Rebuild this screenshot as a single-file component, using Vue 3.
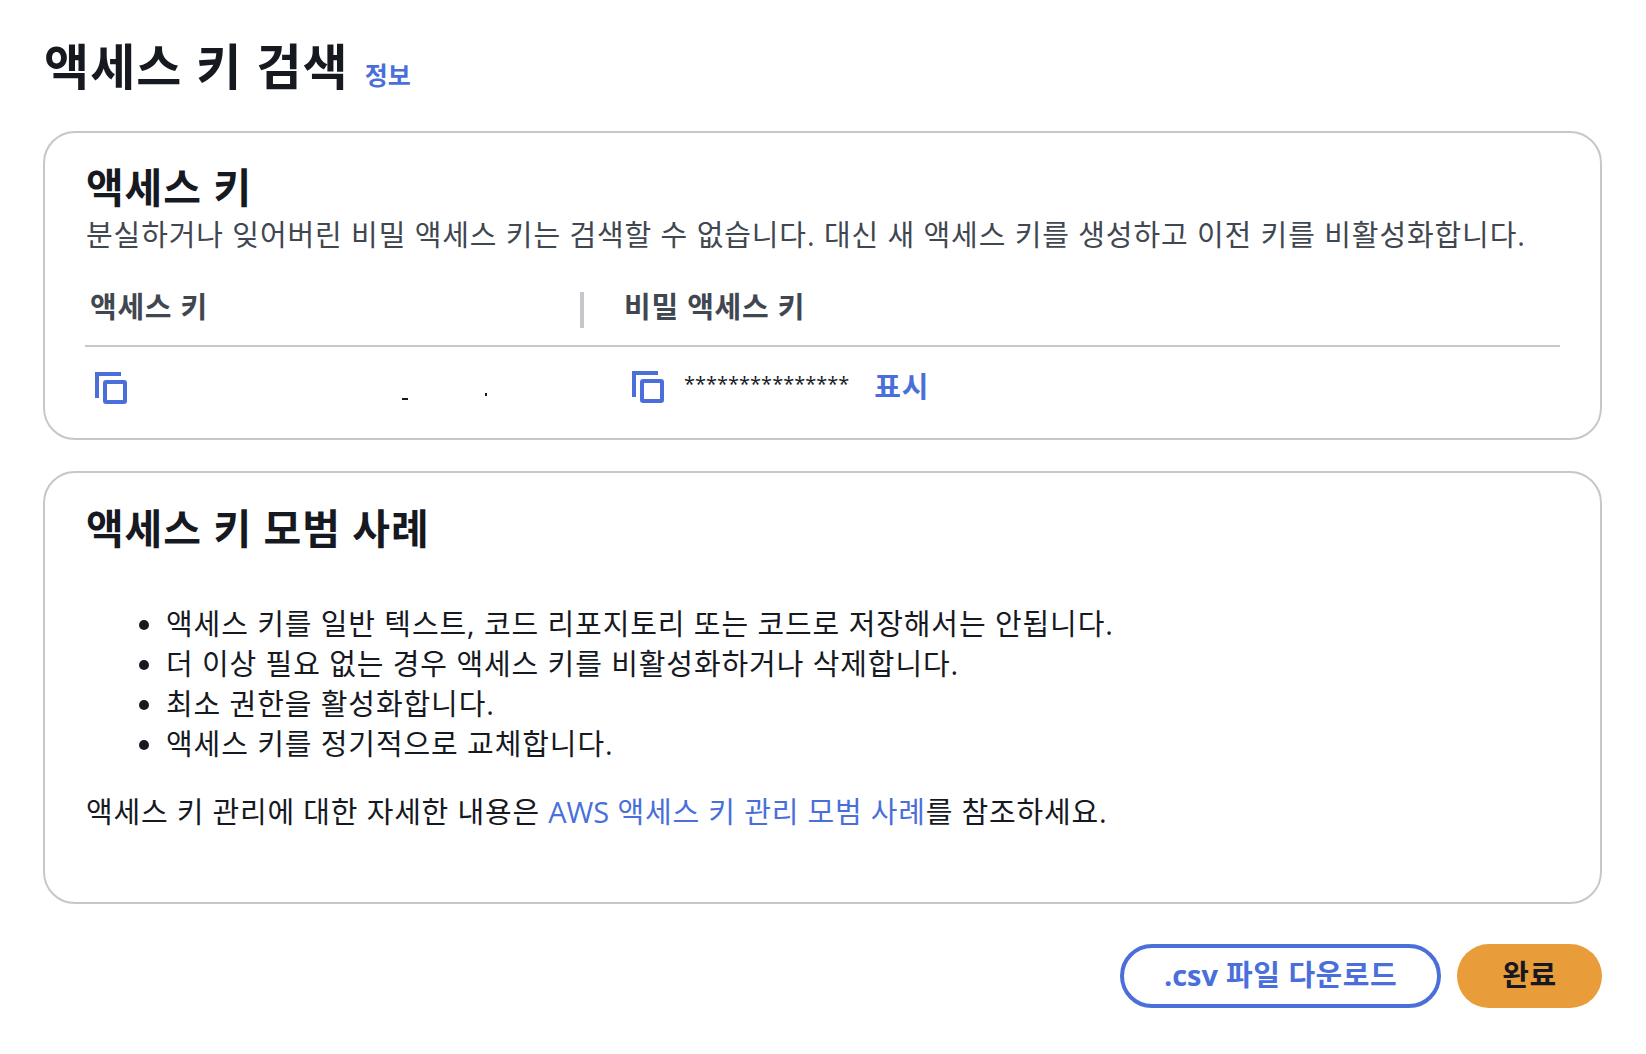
<script setup>
const practices = [
  '액세스 키를 일반 텍스트, 코드 리포지토리 또는 코드로 저장해서는 안됩니다.',
  '더 이상 필요 없는 경우 액세스 키를 비활성화하거나 삭제합니다.',
  '최소 권한을 활성화합니다.',
  '액세스 키를 정기적으로 교체합니다.',
]
</script>

<template>
  <div class="page">
    <header class="page-head">
      <h1>액세스 키 검색</h1>
      <a class="info">정보</a>
    </header>

    <section class="card key-card">
      <h2>액세스 키</h2>
      <p class="desc">분실하거나 잊어버린 비밀 액세스 키는 검색할 수 없습니다. 대신 새 액세스 키를 생성하고 이전 키를 비활성화합니다.</p>
      <div class="table">
        <div class="th first">액세스 키</div>
        <div class="th second">비밀 액세스 키</div>
        <div class="td first">
          <svg class="copy" viewBox="0 0 32 32" width="32" height="32">
            <path d="M26 2H2v24" />
            <rect x="10" y="10" width="20" height="20" rx="1" />
          </svg>
          <span class="redacted">
            <i class="mark a"></i>
            <i class="mark b"></i>
          </span>
        </div>
        <div class="td second">
          <svg class="copy" viewBox="0 0 32 32" width="32" height="32">
            <path d="M26 2H2v24" />
            <rect x="10" y="10" width="20" height="20" rx="1" />
          </svg>
          <span class="stars">***************</span>
          <a class="show">표시</a>
        </div>
      </div>
    </section>

    <section class="card tips-card">
      <h2>액세스 키 모범 사례</h2>
      <ul>
        <li v-for="p in practices" :key="p">{{ p }}</li>
      </ul>
      <p class="more">액세스 키 관리에 대한 자세한 내용은 <a><span class="latin">AWS</span> 액세스 키 관리 모범 사례</a>를 참조하세요.</p>
    </section>

    <footer class="actions">
      <button class="btn outline"><span class="latin">.csv</span> 파일 다운로드</button>
      <button class="btn primary">완료</button>
    </footer>
  </div>
</template>

<style>
html, body {
  background: #fff;
}
</style>

<style scoped>
.page {
  box-sizing: border-box;
  width: 1646px;
  height: 1054px;
  padding: 30px 44px 0 44px;
  font-family: "Open Sans", "Noto Sans CJK KR", sans-serif;
  color: #16191f;
  letter-spacing: 0.9px;
}

.latin {
  letter-spacing: 0;
}

.page-head {
  display: flex;
  align-items: baseline;
  gap: 16px;
  height: 72px;
  margin-bottom: 29px;
}

h1 {
  margin: 0;
  font-size: 49px;
  line-height: 72px;
  font-weight: 700;
  letter-spacing: 1.1px;
  color: #16191f;
}

.info {
  font-size: 25px;
  font-weight: 700;
  letter-spacing: 0;
  color: #4a6fdb;
}

.card {
  box-sizing: border-box;
  margin-left: -1px;
  border: 2px solid #c6c6cd;
  border-radius: 32px;
  padding: 26px 40px 0 41px;
}

.key-card {
  height: 309px;
  margin-bottom: 31px;
}

.tips-card {
  height: 433px;
  padding-top: 27px;
}

h2 {
  margin: 0;
  font-size: 41px;
  line-height: 56px;
  font-weight: 700;
  letter-spacing: 0.9px;
}

.desc {
  margin: 0;
  font-size: 29px;
  line-height: 40px;
  color: #414750;
  white-space: nowrap;
}

.table {
  display: grid;
  grid-template-columns: 502px 1fr;
  margin: 12px 0 0 -1px;
}

.th {
  display: flex;
  align-items: center;
  height: 76px;
  padding-bottom: 2px;
  border-bottom: 2px solid #c6c6cd;
  font-size: 29px;
  font-weight: 700;
  letter-spacing: 0.75px;
  color: #414750;
}

.th.first {
  padding-left: 5px;
}

.th.second {
  position: relative;
  padding-left: 37px;
}

.th.second::before {
  content: "";
  position: absolute;
  left: -7px;
  top: 25px;
  width: 4px;
  height: 36px;
  background: #c6c6cd;
}

.td {
  display: flex;
  align-items: center;
  box-sizing: border-box;
  height: 80px;
}

.td.first {
  padding: 2px 0 0 10px;
  position: relative;
}

.td.second {
  padding: 0 0 0 45px;
}

.copy {
  flex: none;
  fill: none;
  stroke: #4a6fdb;
  stroke-width: 4;
}

.redacted {
  position: absolute;
  left: 0;
  top: 0;
}

.mark {
  position: absolute;
  display: block;
  background: #16191f;
}

.mark.a {
  left: 317px;
  top: 51px;
  width: 6px;
  height: 2px;
}

.mark.b {
  left: 400px;
  top: 46px;
  width: 2px;
  height: 3px;
}

.stars {
  margin-left: 20px;
  margin-bottom: 8px;
  font-size: 20px;
  letter-spacing: 0;
  color: #16191f;
}

.show {
  margin-left: 25px;
  margin-bottom: 4px;
  font-size: 29px;
  font-weight: 700;
  letter-spacing: 0.75px;
  color: #4a6fdb;
}

ul {
  margin: 48px 0 0;
  padding-left: 80px;
  font-size: 29px;
  line-height: 40px;
}

.more {
  margin: 28px 0 0;
  font-size: 29px;
  line-height: 40px;
  letter-spacing: 0.8px;
}

.more a {
  color: #4a6fdb;
}

.actions {
  display: flex;
  justify-content: flex-end;
  gap: 16px;
  margin-top: 40px;
}

.btn {
  box-sizing: border-box;
  height: 64px;
  border-radius: 32px;
  font-family: inherit;
  font-size: 29px;
  font-weight: 700;
  letter-spacing: 0.5px;
  padding: 0 0 6px;
}

.outline {
  width: 321px;
  border: 4px solid #4a6fdb;
  background: #fff;
  color: #4a6fdb;
}

.primary {
  width: 145px;
  border: none;
  background: #e99d3a;
  color: #16191f;
}
</style>
